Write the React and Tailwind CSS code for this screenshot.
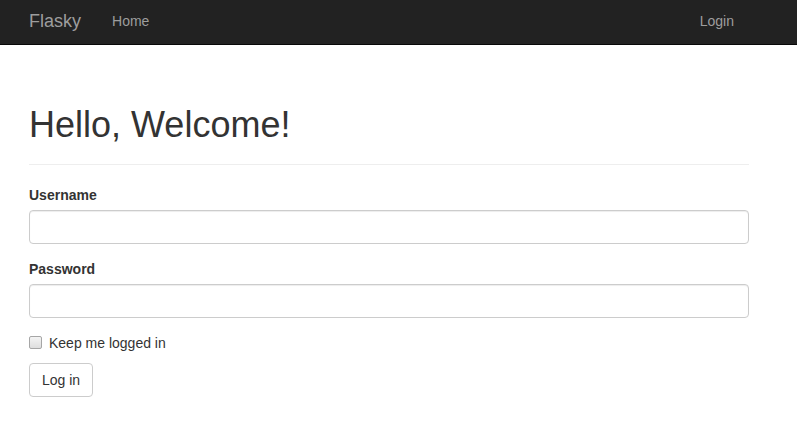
import React, { useState } from 'react';

const font = { fontFamily: '"Liberation Sans", Arial, Helvetica, sans-serif' };

const inputClass = "block w-full h-[34px] px-3 py-[6px] text-[14px] text-[#555] bg-white border border-[#ccc] rounded-[4px] shadow-[inset_0_1px_1px_rgba(0,0,0,0.075)] focus:outline-none focus:border-[#66afe9]";

export default function App() {
    const [form, setForm] = useState({ username: '', password: '', remember: false });

    const handleChange = (e) => setForm({ ...form, [e.target.name]: e.target.value });

    return (
        <div className="min-h-[432px] bg-white text-[#333] text-[14px] leading-[20px]" style={font}>
            <nav className="flex items-center h-[45px] pb-[3px] bg-[#222] border-b border-[#080808]">
                <a href="#" className="ml-[29px] text-[18px] text-[#9d9d9d] leading-[20px]">Flasky</a>
                <a href="#" className="ml-[31px] text-[14px] text-[#9d9d9d]">Home</a>
                <a href="#" className="ml-auto mr-[63px] text-[14px] text-[#9d9d9d]">Login</a>
            </nav>

            <div className="ml-[29px] w-[720px]">
                <div className="mt-[60px] mb-[20px] pb-[9px] border-b border-[#eee]">
                    <h1 className="mb-[10px] text-[36px] leading-[39.6px] font-normal">Hello, Welcome!</h1>
                </div>

                <form onSubmit={(e) => e.preventDefault()}>
                    <div className="mb-[15px]">
                        <label className="inline-block mb-[5px] font-bold">Username</label>
                        <input name="username" value={form.username} onChange={handleChange} className={inputClass} />
                    </div>
                    <div className="mb-[15px]">
                        <label className="inline-block mb-[5px] font-bold">Password</label>
                        <input name="password" type="password" value={form.password} onChange={handleChange} className={inputClass} />
                    </div>
                    <div className="mb-[10px]">
                        <label className="flex items-center h-[20px] cursor-pointer">
                            <span
                                onClick={() => setForm({ ...form, remember: !form.remember })}
                                className="w-[13px] h-[13px] mr-[7px] rounded-[2px] border border-[#a6a6a6] bg-gradient-to-b from-[#f4f4f4] to-[#dedede] flex items-center justify-center"
                            >
                                {form.remember && (
                                    <svg width="9" height="9" viewBox="0 0 9 9"><path d="M1 4.5 L3.5 7 L8 1.5" stroke="#333" strokeWidth="1.5" fill="none" /></svg>
                                )}
                            </span>
                            <span>Keep me logged in</span>
                        </label>
                    </div>
                    <button type="submit" className="h-[34px] px-3 text-[14px] text-[#333] bg-white border border-[#ccc] rounded-[4px]">
                        Log in
                    </button>
                </form>
            </div>
        </div>
    );
}
